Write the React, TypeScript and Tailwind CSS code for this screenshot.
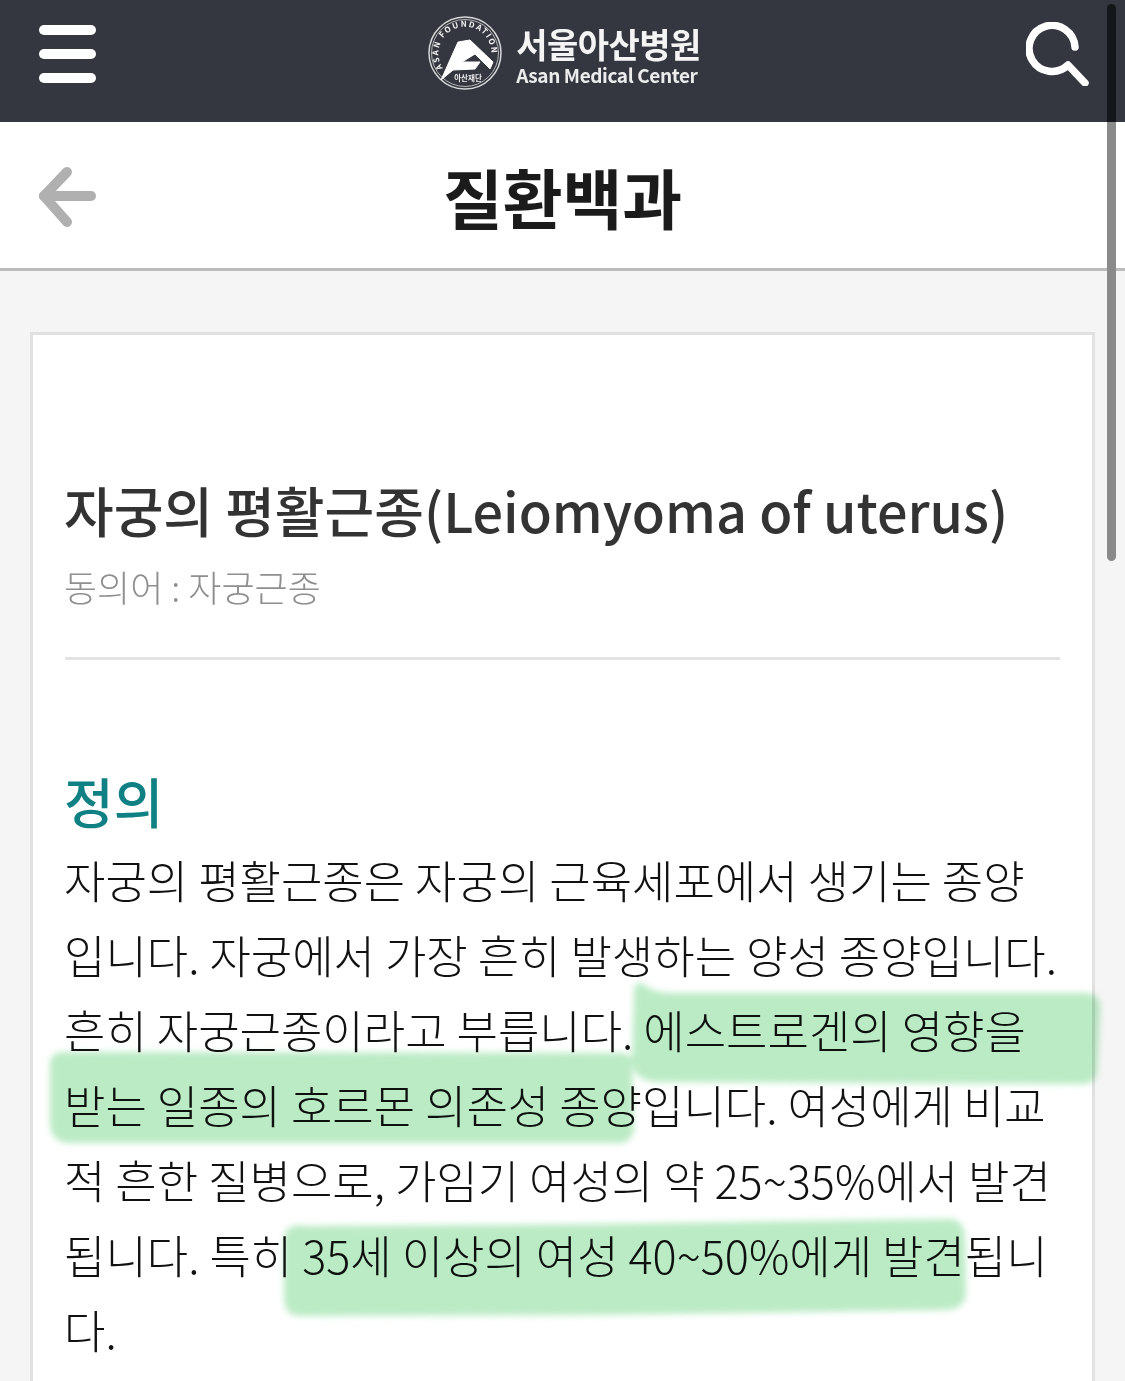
export default function App() {
  const kr = { fontFamily: '"Noto Sans CJK KR", "Noto Sans", sans-serif' };
  return (
    <div className="relative h-[1381px] w-[1125px] overflow-hidden bg-[#f5f5f5] text-[#222]" style={kr}>
      <header className="flex h-[122px] items-center justify-between bg-[#343640] pl-[39px] pr-[35px]">
        <div className="-mt-[14px] flex w-[57px] flex-col gap-[14px]">
          <div className="h-[10px] rounded-full bg-white" />
          <div className="h-[10px] rounded-full bg-white" />
          <div className="h-[10px] rounded-full bg-white" />
        </div>
        <div className="-mt-[16px] ml-[7px] flex items-center gap-[14px]">
          <svg width="74" height="76" viewBox="0 0 74 76">
            <circle cx="37" cy="38" r="36" fill="none" stroke="#d8d8d8" strokeWidth="1.5" />
            <circle cx="37" cy="38" r="33.5" fill="none" stroke="#b8b8b8" strokeWidth="1" />
            <defs>
              <path id="ring" d="M15 53 A26.5 26.5 0 1 1 59 53 A26.5 26.5 0 0 1 37 64.5" />
            </defs>
            <text fill="#f4f4f4" fontSize="8" fontWeight="700" letterSpacing="1.6">
              <textPath href="#ring">ASAN FOUNDATION</textPath>
            </text>
            <path d="M13 65 L30 27 L42 25 L65 47 L62 54 L47 39 L34 47 L52 47 L47 54 L25 55 Z" fill="#fff" stroke="#fff" strokeWidth="1" strokeLinejoin="round" />
            <text x="40" y="66" textAnchor="middle" fill="#eee" fontSize="7.5" fontWeight="700">아산재단</text>
          </svg>
          <div className="flex translate-y-[2px] flex-col items-start">
            <span className="block text-[34px] leading-[38px] font-bold tracking-[-0.5px] text-[#f4f4f4]">서울아산병원</span>
            <span className="mt-[1px] block text-[19px] leading-[22px] font-bold tracking-[-0.4px] text-[#ececec]">Asan Medical Center</span>
          </div>
        </div>
        <svg className="-mt-[14px]" width="64" height="64" viewBox="0 0 64 64" fill="none" stroke="#fff" strokeLinecap="round" strokeLinejoin="round" strokeWidth="7.5">
          <path d="M49 25 A23 23 0 1 0 42 43 L59 61" />
        </svg>
      </header>

      <div className="relative flex h-[149px] items-center justify-center border-b-[3px] border-[#bcbcbc] bg-white">
        <svg className="absolute left-[37px] top-[43px]" width="60" height="64" viewBox="0 0 60 64" fill="none" stroke="#b0b0b0" strokeLinecap="round" strokeLinejoin="round" strokeWidth="10">
          <path d="M30 7 L7 31 L30 57" />
          <path d="M7 31 L54 31" />
        </svg>
        <h1 className="translate-y-[1px] text-[65px] leading-none font-bold text-[#1b1b1b]">질환백과</h1>
      </div>

      <main className="mx-[30px] mt-[61px] h-[1100px] border-[3px] border-[#e1e1e1] bg-white px-[32px] pt-[139px]">
        <h2 className="-ml-px whitespace-nowrap text-[54px] leading-[72px] font-medium text-[#333]">자궁의 평활근종(Leiomyoma of uterus)</h2>
        <p className="-ml-px mt-[15px] text-[36px] leading-[50px] font-light text-[#8f8f8f]">동의어 : 자궁근종</p>
        <hr className="mt-[46px] border-0 border-t-[3px] border-[#e3e3e3]" />
        <h3 className="-ml-px mt-[116px] text-[54px] leading-[50px] font-medium text-[#0f8083]">정의</h3>
        <div className="relative -ml-px mt-[16px] whitespace-nowrap text-[45px] leading-[75px] font-light text-[#111]">
          <div>자궁의 평활근종은 자궁의 근육세포에서 생기는 종양</div>
          <div>입니다. 자궁에서 가장 흔히 발생하는 양성 종양입니다.</div>
          <div>흔히 자궁근종이라고 부릅니다. 에스트로겐의 영향을</div>
          <div>받는 일종의 호르몬 의존성 종양입니다. 여성에게 비교</div>
          <div>적 흔한 질병으로, 가임기 여성의 약 25~35%에서 발견</div>
          <div>됩니다. 특히 35세 이상의 여성 40~50%에게 발견됩니</div>
          <div>다.</div>
        </div>
      </main>

      <svg className="pointer-events-none absolute left-0 top-0 mix-blend-multiply blur-[3px]" width="1125" height="1381" viewBox="0 0 1125 1381" fill="#bbebc5">
        <path d="M634 990 Q636 978 646 986 Q655 994 680 993 L1085 993 Q1100 993 1100 1008 L1097 1072 Q1095 1085 1080 1084 L660 1082 Q634 1082 632 1062 Z" />
        <path d="M50 1065 Q50 1052 65 1052 L620 1053 Q632 1053 632 1062 L634 1130 Q630 1145 615 1143 L70 1143 Q52 1143 50 1125 Z" />
        <path d="M284 1240 Q285 1222 305 1226 L600 1224 L950 1219 Q965 1220 965 1240 L966 1295 Q963 1310 945 1310 L600 1315 L300 1316 Q285 1316 284 1300 Z" />
      </svg>

      <div className="absolute left-[1107px] top-[4px] h-[118px] w-[9px] rounded-t-full bg-[#15161c]" />
      <div className="absolute left-[1107px] top-[122px] h-[439px] w-[9px] rounded-b-full bg-[#8a8a8a]" />
    </div>
  );
}
